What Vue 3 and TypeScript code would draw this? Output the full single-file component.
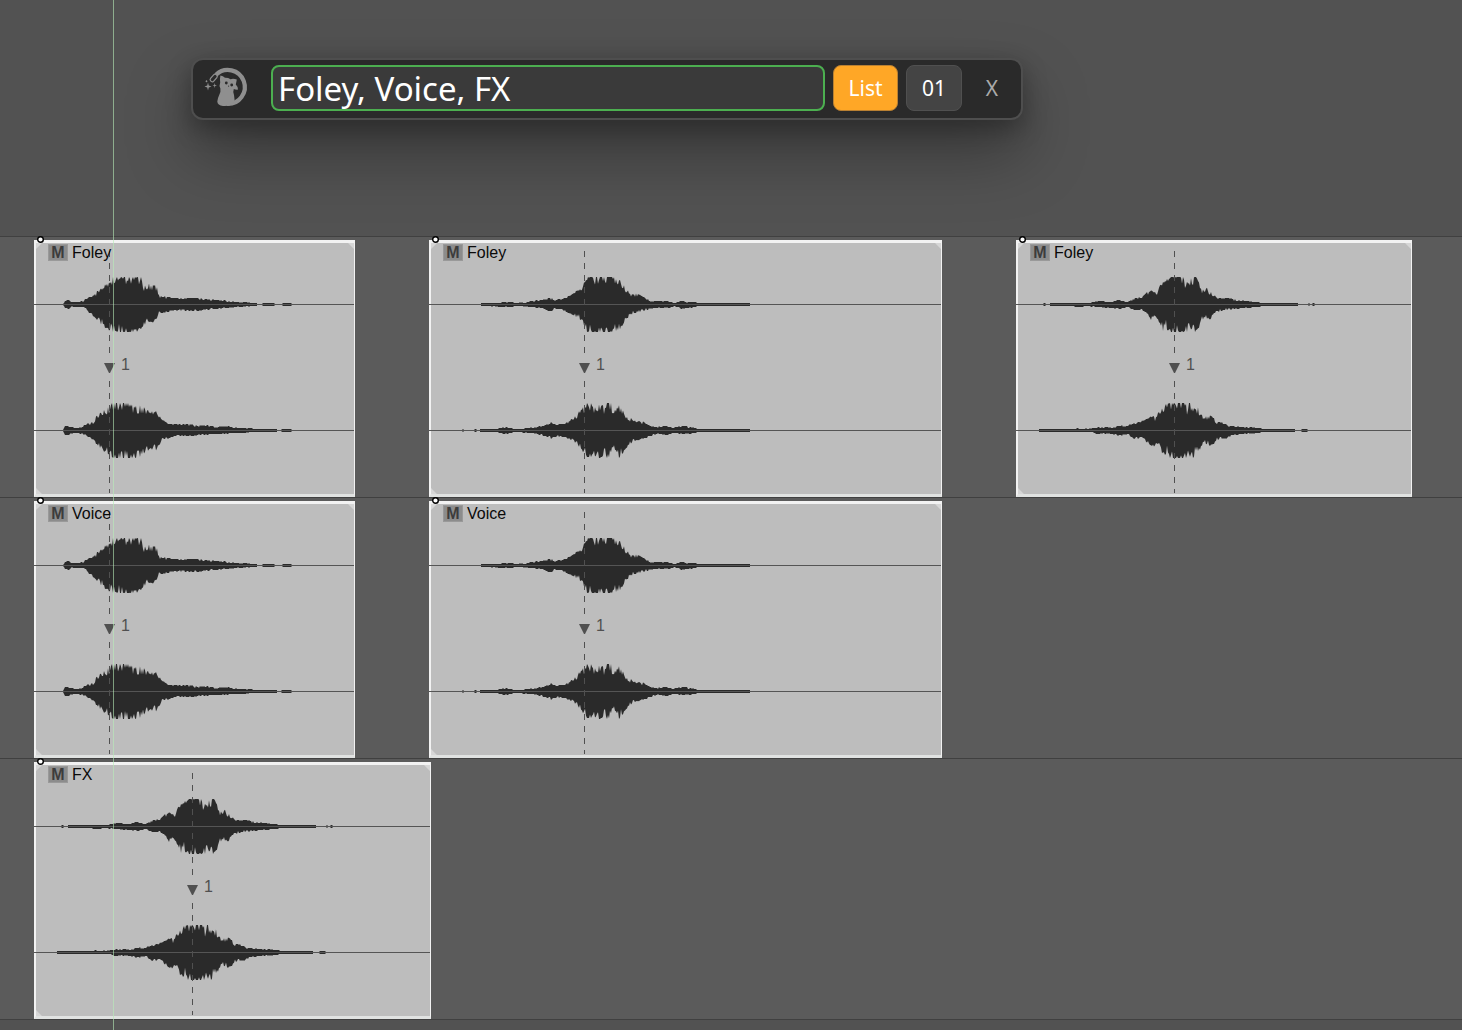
<script setup lang="ts">
import { ref } from 'vue'

type Point = [x: number, amplitude: number]

interface Channel {
  up: Point[]
  down: Point[]
  // Short quiet stretches outside of the main body: [start, end]
  specks: [number, number][]
}

interface Sound {
  marker: number
  channels: [Channel, Channel]
}

interface Clip {
  name: string
  width: number
  sound: Sound
}

const CLIP_HEIGHT = 257
const CENTERS = [64, 190]

const whooshA: Sound = {
  marker: 75,
  channels: [
    {
      up: [[29, 0], [31, 3], [34, 4], [38, 2], [44, 2], [49, 3], [54, 6], [59, 8], [63, 12], [68, 15], [71, 18], [74, 20], [76, 20], [77, 27], [79, 26], [80, 20], [83, 28], [91, 27], [95, 25], [100, 26], [107, 26], [109, 18], [113, 16], [115, 19], [118, 17], [122, 19], [124, 12], [126, 7], [131, 7], [138, 6], [148, 5], [159, 6], [171, 5], [184, 4], [194, 3], [204, 2], [223, 1]],
      down: [[29, 0], [31, 3], [34, 4], [38, 2], [46, 2], [51, 3], [56, 8], [62, 13], [69, 20], [74, 23], [79, 26], [83, 25], [89, 27], [96, 28], [101, 26], [106, 23], [110, 20], [113, 15], [118, 17], [122, 14], [125, 8], [132, 7], [141, 5], [162, 6], [178, 4], [191, 3], [204, 2], [223, 1]],
      specks: [[228, 241], [248, 258]],
    },
    {
      up: [[29, 0], [31, 4], [35, 4], [41, 2], [47, 3], [53, 6], [59, 8], [63, 14], [69, 18], [74, 21], [79, 26], [83, 27], [91, 28], [97, 24], [101, 22], [106, 23], [112, 20], [117, 16], [120, 20], [124, 15], [128, 10], [134, 6], [144, 6], [156, 6], [163, 4], [171, 5], [181, 3], [193, 4], [204, 2], [214, 2], [221, 1], [243, 1]],
      down: [[29, 0], [31, 4], [35, 4], [41, 2], [51, 4], [57, 7], [64, 14], [71, 20], [76, 23], [82, 28], [89, 27], [98, 27], [106, 24], [111, 20], [116, 17], [122, 18], [125, 14], [128, 8], [134, 7], [142, 5], [156, 5], [164, 4], [181, 3], [204, 2], [221, 1], [243, 1]],
      specks: [[247, 258]],
    },
  ],
}

const whooshB: Sound = {
  marker: 155,
  channels: [
    {
      up: [[52, 1], [68, 1], [76, 2], [83, 2], [88, 1], [93, 2], [96, 1], [103, 3], [111, 4], [122, 6], [126, 4], [133, 5], [139, 7], [143, 9], [148, 13], [153, 14], [155, 20], [158, 25], [159, 28], [163, 27], [165, 24], [168, 28], [184, 28], [187, 23], [193, 22], [196, 15], [203, 9], [208, 10], [216, 6], [223, 3], [241, 3], [246, 1], [253, 3], [258, 2], [267, 2], [269, 1], [321, 1]],
      down: [[52, 1], [76, 2], [83, 2], [88, 1], [103, 2], [113, 3], [121, 6], [126, 4], [133, 4], [138, 7], [143, 9], [148, 12], [153, 15], [156, 21], [158, 26], [163, 28], [181, 28], [184, 24], [189, 24], [193, 21], [196, 14], [199, 12], [204, 8], [216, 5], [224, 3], [241, 3], [246, 1], [253, 4], [267, 2], [269, 1], [321, 1]],
      specks: [],
    },
    {
      up: [[51, 1], [68, 1], [73, 3], [82, 2], [84, 1], [93, 1], [98, 2], [106, 3], [114, 4], [122, 7], [128, 5], [136, 6], [142, 10], [148, 14], [151, 19], [154, 21], [159, 27], [163, 24], [168, 19], [172, 28], [175, 20], [179, 28], [182, 25], [185, 17], [189, 24], [193, 20], [197, 12], [201, 12], [204, 9], [214, 8], [219, 5], [226, 3], [238, 4], [244, 2], [253, 4], [267, 2], [269, 1], [321, 1]],
      down: [[51, 1], [68, 1], [76, 3], [82, 2], [84, 1], [103, 2], [113, 4], [122, 7], [129, 5], [136, 6], [143, 9], [148, 12], [151, 16], [156, 22], [160, 26], [164, 22], [172, 28], [175, 20], [179, 28], [183, 17], [185, 15], [190, 27], [195, 19], [199, 14], [204, 10], [216, 7], [221, 5], [229, 3], [238, 4], [244, 2], [253, 3], [267, 2], [269, 1], [321, 1]],
      specks: [[33, 35], [45, 48]],
    },
  ],
}

const whooshC: Sound = {
  marker: 158,
  channels: [
    {
      up: [[34, 1], [75, 1], [77, 2], [84, 3], [94, 2], [104, 4], [111, 2], [119, 6], [126, 7], [132, 12], [137, 13], [141, 9], [144, 18], [149, 22], [154, 25], [157, 28], [165, 28], [169, 22], [172, 20], [176, 25], [180, 28], [183, 20], [186, 13], [191, 15], [196, 10], [202, 6], [211, 6], [221, 4], [231, 3], [242, 2], [246, 1], [282, 1]],
      down: [[34, 1], [57, 1], [61, 2], [67, 2], [69, 1], [81, 2], [97, 3], [104, 4], [111, 2], [119, 5], [126, 5], [131, 8], [135, 14], [139, 10], [143, 16], [147, 24], [150, 21], [152, 25], [157, 28], [164, 28], [171, 26], [173, 21], [179, 26], [182, 24], [185, 15], [189, 12], [194, 14], [198, 8], [207, 5], [221, 4], [227, 3], [242, 2], [246, 1], [282, 1]],
      specks: [[27, 30], [292, 294], [296, 299]],
    },
    {
      up: [[23, 1], [59, 1], [61, 2], [64, 1], [76, 2], [91, 3], [97, 2], [104, 5], [111, 4], [119, 7], [127, 9], [132, 11], [137, 14], [139, 11], [142, 16], [147, 21], [152, 26], [156, 28], [169, 28], [171, 20], [173, 28], [177, 20], [182, 21], [187, 12], [196, 14], [200, 8], [206, 7], [214, 4], [227, 3], [244, 2], [246, 1], [279, 1]],
      down: [[23, 1], [76, 1], [81, 3], [97, 3], [104, 5], [111, 3], [119, 8], [126, 6], [131, 11], [137, 15], [142, 12], [148, 25], [151, 19], [154, 25], [157, 28], [169, 28], [172, 21], [177, 28], [179, 19], [184, 18], [187, 11], [194, 14], [198, 12], [201, 8], [211, 7], [216, 4], [227, 3], [244, 2], [246, 1], [279, 1]],
      specks: [[285, 292]],
    },
  ],
}

const tracks: Clip[][] = [
  [
    { name: 'Foley', width: 321, sound: whooshA },
    { name: 'Foley', width: 513, sound: whooshB },
    { name: 'Foley', width: 396, sound: whooshC },
  ],
  [
    { name: 'Voice', width: 321, sound: whooshA },
    { name: 'Voice', width: 513, sound: whooshB },
  ],
  [{ name: 'FX', width: 397, sound: whooshC }],
]

function amplitudeAt(points: Point[], x: number): number {
  for (let i = 1; i < points.length; i++) {
    const [x0, a0] = points[i - 1]
    const [x1, a1] = points[i]
    if (x <= x1) return a0 + ((a1 - a0) * (x - x0)) / (x1 - x0)
  }
  return 0
}

// Peaks every few samples, with dips whose depth varies but never changes between renders
function ripple(x: number, seed: number): number {
  const hash = Math.sin(x * 12.9898 + seed * 78.233) * 43758.5453
  const random = hash - Math.floor(hash)
  if ((x + seed) % 4 === 0) return 1.08
  return 1.04 - random * random * 0.34
}

function edge(points: Point[], center: number, sign: number, seed: number): string[] {
  const start = points[0][0]
  const end = points[points.length - 1][0]
  const out: string[] = []
  for (let x = start; x <= end; x++) {
    const a = amplitudeAt(points, x)
    const size = a > 1.2 ? a * ripple(x, seed) : a
    // Quiet parts fall on whole pixels, which gives them their stepped outline
    const level = a < 8 ? Math.round(size) : size
    out.push(`${x} ${(center + sign * (Math.min(27, level) + 0.5)).toFixed(1)}`)
  }
  return out
}

function wavePath(channel: Channel, index: number): string {
  const center = CENTERS[index] + 0.5
  const top = edge(channel.up, center, -1, index + 1)
  const bottom = edge(channel.down, center, 1, index + 5).reverse()
  const specks = channel.specks.map(
    ([a, b]) => `M${a} ${center - 0.5}L${a + 1} ${center - 1.5}H${b - 1}L${b} ${center - 0.5}V${center + 0.5}L${b - 1} ${center + 1.5}H${a + 1}L${a} ${center + 0.5}Z`,
  )
  return `M${top.join('L')}L${bottom.join('L')}Z${specks.join('')}`
}

const pattern = ref('Foley, Voice, FX')
</script>

<template>
  <main class="page">
    <header class="top">
      <form class="renamer" @submit.prevent>
        <svg class="logo" viewBox="0 0 54 54" aria-hidden="true">
          <path d="M16 13.700A17 17 0 1 1 27 42.900" fill="none" stroke="#8f8f8f" stroke-width="4.200" />
          <rect x="11.600" y="12.800" width="4.200" height="8.400" rx="1.800" transform="rotate(40 13.700 17)" fill="#2a2a2a" stroke="#8f8f8f" stroke-width="1.200" />
          <path
            d="M20.400 14.600Q23 15 25 16.800Q28 16.600 30.500 18.200Q33.500 17.300 36.800 18.600Q36.300 21.500 35.800 23.500Q38.300 26 38 28.600Q35.500 28.800 33.800 28Q32.800 30 34 34Q35.200 39 33.800 42.600Q29 45.600 23 45Q17.500 44.300 17.300 40.500Q17.500 37.500 19.200 34Q21 30.500 20.400 27.500Q18.800 25 20.200 21.500Q19.600 18 20.400 14.600Z"
            fill="#8f8f8f"
          />
          <circle cx="26.300" cy="22" r="1.400" fill="#2a2a2a" />
          <circle cx="31.700" cy="24" r="1.400" fill="#2a2a2a" />
          <path d="M28 24.500L29.300 25L28.400 25.900Z" fill="#2a2a2a" />
          <path
            d="M8 21.500L8.800 24.600L11.500 25.500L8.800 26.400L8 29.500L7.200 26.400L4.500 25.500L7.200 24.600ZM14.700 22L15.200 23.900L17 24.500L15.200 25.100L14.700 27L14.200 25.100L12.400 24.500L14.200 23.900ZM6.500 19L7.600 20.300L6.500 21.600L5.400 20.300Z"
            fill="#8f8f8f"
          />
        </svg>
        <input v-model="pattern" class="pattern" type="text" aria-label="Name pattern" spellcheck="false" />
        <button class="btn list" type="button">List</button>
        <button class="btn count" type="button">01</button>
        <button class="btn close" type="button">X</button>
      </form>
    </header>

    <section v-for="(clips, t) in tracks" :key="t" class="track">
      <article v-for="(clip, c) in clips" :key="c" class="clip" :style="{ width: clip.width + 'px' }">
        <svg class="wave" :width="clip.width" :height="CLIP_HEIGHT" aria-hidden="true">
          <path class="corner" :d="`M2 9V3H8ZM${clip.width - 7} 3H${clip.width - 1}V9ZM2 248V254H8Z`" />
          <path
            v-for="(channel, i) in clip.sound.channels"
            :key="i"
            class="shape"
            :d="wavePath(channel, i)"
          />
          <path class="zero" :d="`M0 64.500H${clip.width - 1}M0 190.500H${clip.width - 1}`" />
          <path class="dash" :d="`M${clip.sound.marker + 0.5} 11V114`" />
          <path class="dash" :d="`M${clip.sound.marker + 0.5} 141V253`" />
          <path class="flag" :d="`M${clip.sound.marker - 5} 123h11l-5 10h-1z`" />
          <circle class="handle" cx="6.500" cy="-0.500" r="2.800" />
        </svg>
        <div class="title">
          <button class="mute" type="button">M</button>
          <span>{{ clip.name }}</span>
        </div>
        <span class="number" :style="{ left: clip.sound.marker + 10 + 'px' }">1</span>
      </article>
    </section>
    <footer class="bottom"></footer>
    <div class="playhead"></div>
  </main>
</template>

<style>
body {
  margin: 0;
  background: #525252;
}
</style>

<style scoped>
.page {
  position: relative;
  display: flex;
  flex-direction: column;
  min-height: 100vh;
  overflow: hidden;
  background: #525252;
  font-family: 'Liberation Sans', Arial, sans-serif;
}

.top {
  box-sizing: border-box;
  min-height: 236px;
  padding: 58px 20px 0 191px;
}

.renamer {
  box-sizing: border-box;
  display: flex;
  align-items: center;
  gap: 8px;
  max-width: 832px;
  padding: 5px 7px 7px;
  border: 2px solid #4e4e4e;
  border-radius: 12px;
  background: #2a2a2a;
  box-shadow: 0 32px 64px rgba(0, 0, 0, 0.35), 0 8px 24px rgba(0, 0, 0, 0.3);
  font-family: 'Noto Sans', 'Open Sans', sans-serif;
}

.logo {
  flex: none;
  width: 54px;
  height: 54px;
  margin: -4px 9px -4px 0;
}

.pattern {
  box-sizing: border-box;
  flex: 1;
  min-width: 0;
  height: 46px;
  padding: 0 5px;
  border: 2px solid #4caf50;
  border-radius: 8px;
  outline: none;
  background: #3a3a3a;
  color: #fff;
  font-family: inherit;
  font-size: 33px;
}

.btn {
  box-sizing: border-box;
  flex: none;
  height: 46px;
  padding: 0;
  border: 1px solid transparent;
  border-radius: 8px;
  font-family: inherit;
  font-size: 21px;
}

.list {
  width: 65px;
  border-color: #b98032;
  background: #ffa726;
  color: #fff;
}

.count {
  width: 56px;
  border-color: #505050;
  background: #444;
  color: #fff;
}

.close {
  width: 44px;
  background: transparent;
  color: #aaa;
}

.track {
  display: flex;
  gap: 74px;
  padding: 3px 34px 0;
  border-top: 1px solid #404040;
  background: #5b5b5b;
}

.clip {
  position: relative;
  box-sizing: border-box;
  flex: none;
  height: 257px;
  border: solid #f2f2f2;
  border-width: 3px 1px 3px 2px;
  border-bottom-color: #e0e2e1;
  background: #bdbdbd;
}

.wave {
  position: absolute;
  top: -3px;
  left: -2px;
  overflow: visible;
}

.corner {
  fill: #d6d6d6;
}

.shape {
  fill: #2a2a2a;
}

.zero {
  fill: none;
  stroke: #555;
}

.dash {
  fill: none;
  stroke: #505050;
  stroke-dasharray: 6 6;
}

.flag {
  fill: #505050;
}

.handle {
  fill: #fff;
  stroke: #000;
  stroke-width: 1.4px;
}

.title {
  position: relative;
  display: flex;
  align-items: center;
  gap: 4px;
  height: 17px;
  padding: 1px 0 0 12px;
  color: #0a0a0a;
  font-size: 16px;
  line-height: 17px;
}

.mute {
  box-sizing: border-box;
  width: 20px;
  height: 17px;
  padding: 0;
  border: 1px solid #999;
  background: #8c8c8c;
  color: #3c3c3c;
  font-family: inherit;
  font-size: 16px;
  font-weight: bold;
  line-height: 15px;
}

.number {
  position: absolute;
  top: 112px;
  color: #505050;
  font-size: 16px;
  line-height: 20px;
}

.bottom {
  flex: 1;
  min-height: 10px;
  border-top: 1px solid #404040;
}

.playhead {
  position: absolute;
  top: 0;
  bottom: 0;
  left: 113px;
  width: 1px;
  background: rgba(184, 236, 184, 0.6);
}
</style>
